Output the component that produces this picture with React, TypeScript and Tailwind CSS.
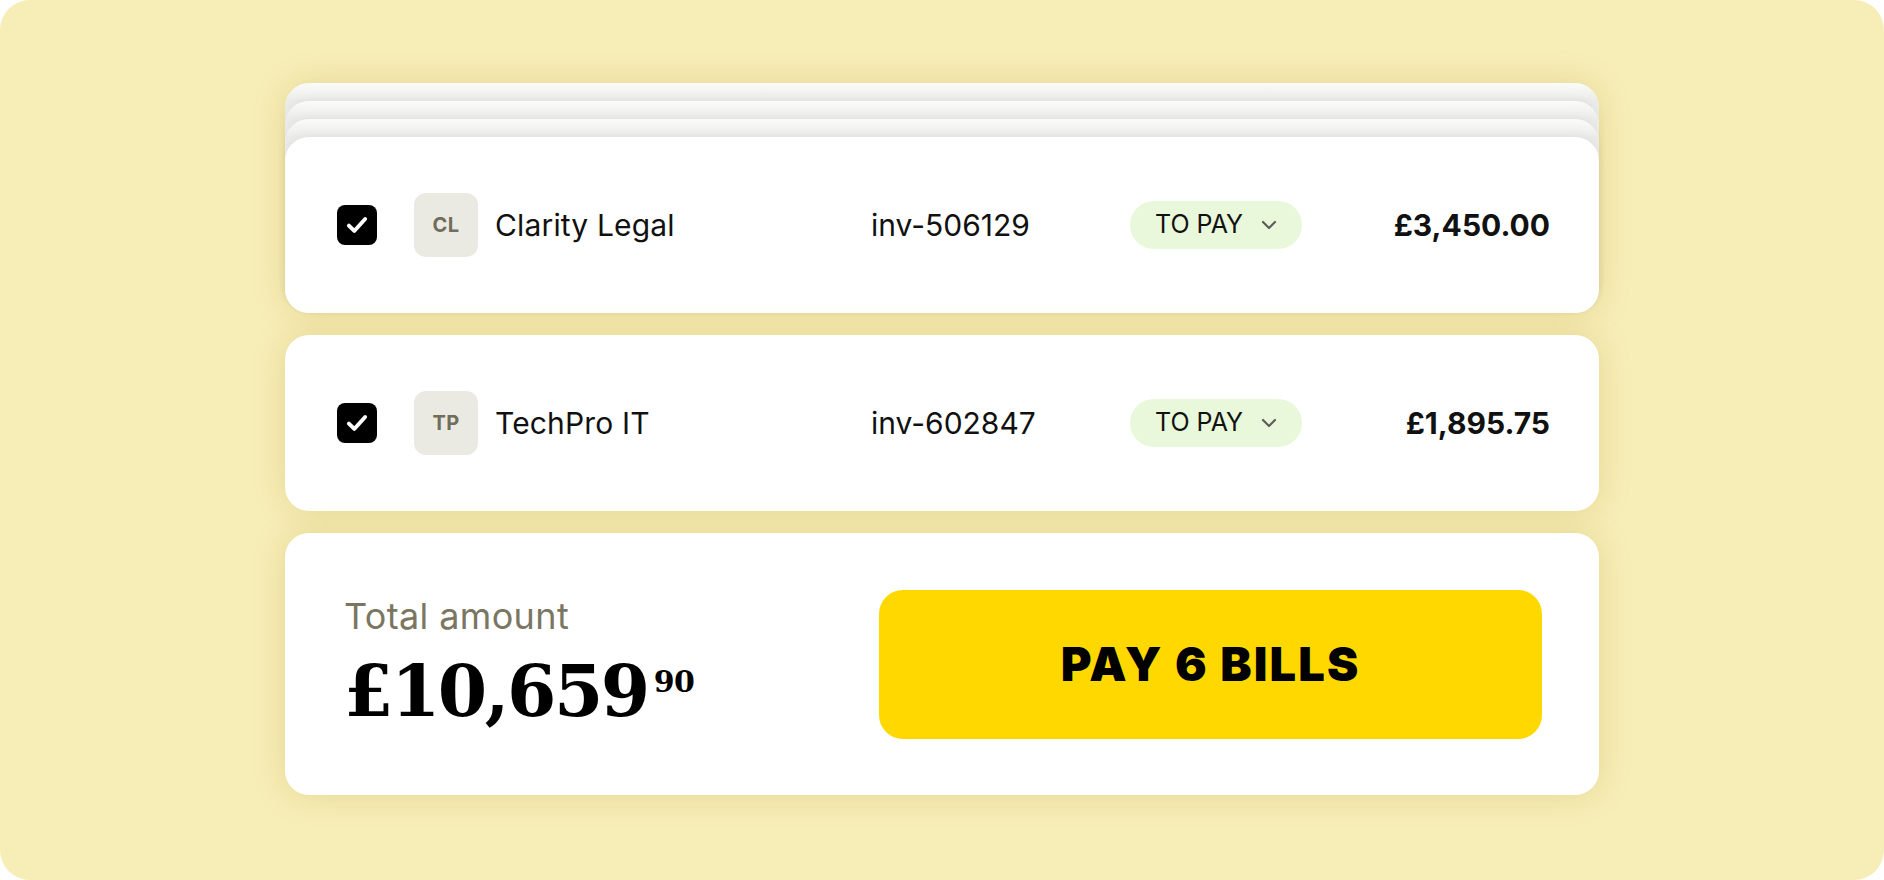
import { ReactNode } from 'react';

const sans = { fontFamily: 'Inter, "Noto Sans", sans-serif' };

type Bill = {
  initials: string;
  name: string;
  invoice: string;
  amount: string;
};

const bills: Bill[] = [
  { initials: 'CL', name: 'Clarity Legal', invoice: 'inv-506129', amount: '£3,450.00' },
  { initials: 'TP', name: 'TechPro IT', invoice: 'inv-602847', amount: '£1,895.75' },
];

function Checkbox() {
  return (
    <div className="w-[40px] h-[40px] rounded-[8px] bg-black flex items-center justify-center shrink-0">
      <svg width="26" height="26" viewBox="0 0 24 24" fill="none">
        <path d="M4.5 12.5l5 5 10-11" stroke="white" strokeWidth="3.6" strokeLinecap="round" strokeLinejoin="round" />
      </svg>
    </div>
  );
}

function BillRow({ bill }: { bill: Bill }) {
  return (
    <div className="h-[176px] flex items-center pl-[52px] pr-[49px]" style={sans}>
      <div className="w-[534px] flex items-center shrink-0">
        <Checkbox />
        <div className="ml-[37px] w-[64px] h-[64px] rounded-[12px] bg-[#ebeae2] flex items-center justify-center text-[20px] font-bold text-[#706d5c] tracking-[0.02em]">
          {bill.initials}
        </div>
        <span className="ml-[17px] text-[30px] tracking-[0.005em] text-[#111]">{bill.name}</span>
      </div>
      <div className="w-[259px] shrink-0 text-[30px] text-[#111]">{bill.invoice}</div>
      <div className="h-[48px] rounded-full bg-[#e9f7da] flex items-center pl-[25px] pr-[23px] gap-[16px]">
        <span className="text-[25px] text-[#111]">TO PAY</span>
        <svg width="20" height="14" viewBox="0 0 20 14" fill="none">
          <path d="M4 4l6 6 6-6" stroke="#5e5e58" strokeWidth="2.2" strokeLinecap="round" strokeLinejoin="round" />
        </svg>
      </div>
      <div className="flex-1 text-right text-[30px] font-bold text-[#111]">{bill.amount}</div>
    </div>
  );
}

// paper layers peeking out above the first bill
function Layer({ children, outer }: { children: ReactNode; outer?: boolean }) {
  return (
    <div
      className={`rounded-[24px] pt-[18px] bg-[linear-gradient(180deg,#fbfbfa_0px,#f4f4f3_8px,#ebebea_18px)] ${
        outer ? 'shadow-[0_0_32px_rgba(170,140,20,0.22)]' : 'shadow-[0_-3px_8px_rgba(0,0,0,0.04)]'
      }`}
    >
      {children}
    </div>
  );
}

export default function App() {
  return (
    <div className="min-h-screen bg-white">
      <div className="w-[1884px] h-[880px] rounded-[30px] bg-[#f7edb7] pt-[83px]">
        <div className="mx-auto w-[1314px] flex flex-col gap-[22px]">
          <Layer outer>
            <Layer>
              <Layer>
                <div className="rounded-[24px] bg-white shadow-[0_-3px_8px_rgba(0,0,0,0.04)]">
                  <BillRow bill={bills[0]} />
                </div>
              </Layer>
            </Layer>
          </Layer>

          <div className="rounded-[24px] bg-white shadow-[0_0_32px_rgba(170,140,20,0.22)]">
            <BillRow bill={bills[1]} />
          </div>

          <div className="h-[262px] rounded-[24px] bg-white shadow-[0_0_32px_rgba(170,140,20,0.22)] flex items-center justify-between pl-[59px] pr-[57px]">
            <div className="flex flex-col -mt-[6px]">
              <span className="text-[36px] tracking-[0.01em] text-[#7a7662] leading-[40px]" style={sans}>
                Total amount
              </span>
              <div
                className="flex items-start font-bold text-black leading-none mt-[20px]"
                style={{ fontFamily: '"DejaVu Serif", "Liberation Serif", serif' }}
              >
                <span className="text-[71px] tracking-[-0.035em]">£10,659</span>
                <span className="text-[30px] ml-[6px] mt-[11px] tracking-[-0.02em]">90</span>
              </div>
            </div>
            <button
              className="w-[663px] h-[149px] rounded-[24px] bg-[#ffd800] text-[47px] font-black text-black tracking-[0.045em]"
              style={sans}
            >
              PAY 6 BILLS
            </button>
          </div>
        </div>
      </div>
    </div>
  );
}
